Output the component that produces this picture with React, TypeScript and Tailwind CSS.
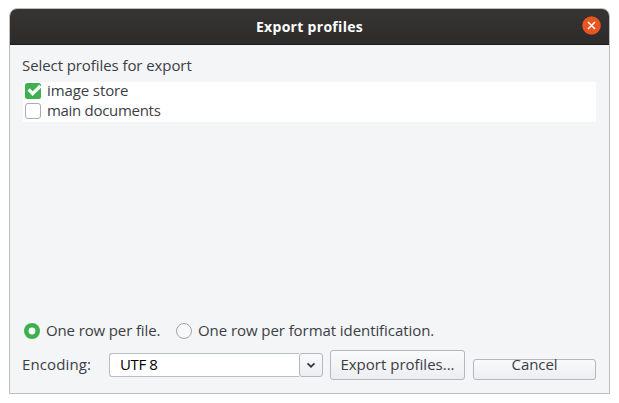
import React from "react";

function CheckBox({ checked }: { checked?: boolean }) {
  return (
    <svg className="block size-4 shrink-0" viewBox="0 0 16 16">
      {checked ? (
        <>
          <rect width="16" height="16" rx="2.5" fill="#3fb04f" />
          <path d="M3.6 6.4 L7.6 10.6 L15.4 3" fill="none" stroke="#fff" strokeWidth="3.3" />
        </>
      ) : (
        <rect x="0.5" y="0.5" width="15" height="15" rx="2.5" fill="#fff" stroke="#a9acb2" />
      )}
    </svg>
  );
}

function Radio({ checked }: { checked?: boolean }) {
  return (
    <svg className="block size-4 shrink-0" viewBox="0 0 16 16">
      {checked ? (
        <>
          <circle cx="8" cy="8" r="8" fill="#3fb04f" />
          <circle cx="8" cy="8" r="3.4" fill="#fff" />
        </>
      ) : (
        <circle cx="8" cy="8" r="7.5" fill="#f7f8f9" stroke="#a0a2a6" />
      )}
    </svg>
  );
}

export default function App() {
  return (
    <div className="h-[403px] w-[619px] overflow-hidden bg-white pt-2 pl-[9px] font-['Open_Sans','Noto_Sans',sans-serif] text-[15px] leading-5 whitespace-nowrap text-[#3b3e45]">
      <div className="flex h-[386px] w-[601px] flex-col overflow-hidden rounded-t-[8px] border border-[#bcbdbf] bg-[#f4f5f7]">
        <header className="relative flex h-9 shrink-0 items-center justify-center border-b border-[#1c1b1a] bg-linear-to-b from-[#363532] to-[#2d2b2b] text-[14px] font-bold text-white">
          <span className="tracking-[0.3px]">Export profiles</span>
          <svg className="absolute top-[7px] right-[8px] size-[19px]" viewBox="0 0 19 19">
            <circle cx="9.5" cy="9.5" r="9.3" fill="#e95420" />
            <path d="M6 6 L13 13 M13 6 L6 13" stroke="#fff" strokeWidth="1.5" />
          </svg>
        </header>
        <main className="flex grow flex-col pr-[13px] pl-3">
          <div className="mt-[10px] h-5"><span className="tracking-[-0.08px]">Select profiles for export</span></div>
          <div className="mt-[7px] ml-px bg-white">
            <div className="flex h-5 items-start pt-px pl-[2px]">
              <CheckBox checked />
              <span className="-mt-[3px] ml-[6px] tracking-[-0.1px]">image store</span>
            </div>
            <div className="flex h-5 items-start pt-px pl-[2px]">
              <CheckBox />
              <span className="-mt-[3px] ml-[6px] tracking-[-0.3px]">main documents</span>
            </div>
          </div>
          <div className="mt-auto flex h-5 items-center pl-[2px]">
            <Radio checked />
            <span className="mb-[2px] ml-[6px] w-[130px] tracking-[-0.13px]">One row per file.</span>
            <Radio />
            <span className="mb-[2px] ml-[6px] tracking-[-0.07px]">One row per format identification.</span>
          </div>
          <div className="mt-[9px] mb-[13px] flex h-[30px] items-start">
            <span className="mt-[4px] w-[87px] tracking-[0.12px]">Encoding:</span>
            <div className="mt-[3px] flex h-6 w-[214px]">
              <div className="flex w-[190px] items-center rounded-l-[3px] border border-r-0 border-[#b9bdc5] bg-white pl-[10px] text-black">
                <span className="mb-[2px] tracking-[-0.4px]">UTF 8</span>
              </div>
              <div className="flex w-6 items-center justify-center rounded-[3px] border border-[#b3b7bf] bg-linear-to-b from-[#f9fafb] to-[#eceef1]">
                <svg className="size-[10px]" viewBox="0 0 10 10">
                  <path d="M1.5 3.3 L5 6.7 L8.5 3.3" fill="none" stroke="#34363b" strokeWidth="1.7" />
                </svg>
              </div>
            </div>
            <div className="ml-[7px] flex h-[30px] w-[135px] items-center justify-center rounded-[3px] border border-[#b3b7bf] bg-linear-to-b from-[#f9fafb] to-[#eceef1]">
              <span className="mb-[2px]">Export profiles...</span>
            </div>
            <div className="mt-[9px] ml-2 flex h-[21px] w-[123px] justify-center rounded-[3px] border border-[#b3b7bf] bg-linear-to-b from-[#f9fafb] to-[#eceef1]">
              <span className="-mt-[6px] tracking-[-0.1px]">Cancel</span>
            </div>
          </div>
        </main>
      </div>
    </div>
  );
}
